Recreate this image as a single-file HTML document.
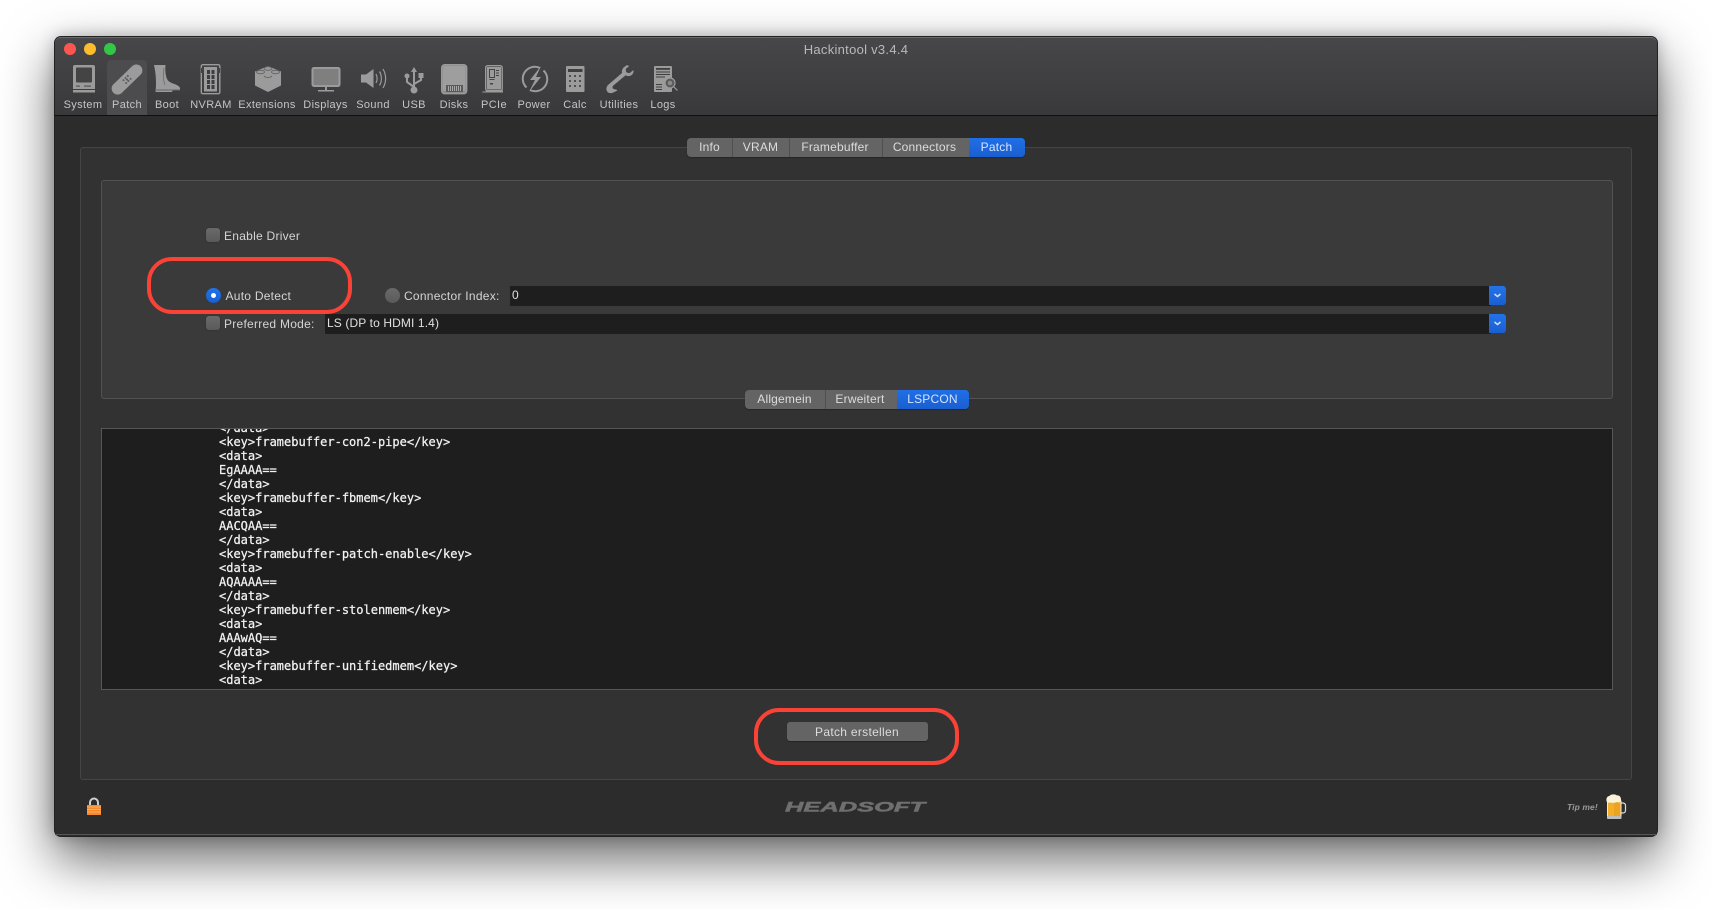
<!DOCTYPE html>
<html lang="en"><head><meta charset="utf-8"><title>Hackintool</title>
<style>
html,body{margin:0;padding:0;width:1712px;height:909px;overflow:hidden;background:#fff;font-family:"Liberation Sans",sans-serif}
.a{position:absolute;box-sizing:border-box}
.t{position:absolute;white-space:nowrap;line-height:14px;color:#d4d4d4;font-size:12px;letter-spacing:.26px}
.c{position:absolute;white-space:nowrap;transform:translateX(-50%);line-height:14px}
.lb{color:#c4c4c4;font-size:11px;letter-spacing:.36px;top:98px}
.seg{position:absolute;height:19px;border-radius:4px;background:#646464;overflow:hidden;box-shadow:0 1px 1px rgba(0,0,0,.25)}
.seg i{position:absolute;top:0;bottom:0;width:1px;background:#4f4f4f}
.seg b{position:absolute;top:0;bottom:0;right:0;background:linear-gradient(#1f6fe6,#1a5fd0)}
.seg span{position:absolute;top:2px;transform:translateX(-50%);font-size:12px;line-height:15px;color:#dcdcdc;white-space:nowrap;letter-spacing:.2px}
.cb{position:absolute;width:14px;height:14px;border-radius:3px;background:linear-gradient(#6a6a6a,#5a5a5a);box-shadow:0 0 1px rgba(0,0,0,.5)}
.fld{position:absolute;background:#1e1e1e;color:#e0e0e0;font-size:12px;line-height:18px;height:20px;letter-spacing:.12px}
.blue{position:absolute;left:1489px;width:17px;height:19px;border-radius:0 3px 3px 0;background:linear-gradient(#2273ea,#1a5fd0)}
.red{position:absolute;box-sizing:border-box;border:4px solid #fb4237;border-radius:25px}
</style></head><body>

<div class="a" style="left:55px;top:37px;width:1602px;height:799px;border-radius:6px;background:#2c2c2c;box-shadow:0 0 0 1px #222,0 22px 52px 2px rgba(0,0,0,.58),0 0 16px rgba(0,0,0,.26)"></div>
<div class="a" style="left:55px;top:37px;width:1602px;height:79px;border-radius:6px 6px 0 0;background:linear-gradient(#47474a,#39393b);border-top:1px solid #6a6a6a;border-bottom:1px solid #0f0f0f"></div>
<div class="a" style="left:55px;top:834px;width:1602px;height:1px;background:#555"></div>

<div class="a" style="left:64px;top:43px;width:12px;height:12px;border-radius:50%;background:#fc5650"></div>
<div class="a" style="left:84px;top:43px;width:12px;height:12px;border-radius:50%;background:#fdbc2e"></div>
<div class="a" style="left:104px;top:43px;width:12px;height:12px;border-radius:50%;background:#33c748"></div>
<div class="c" style="left:856px;top:42.500px;font-size:13px;color:#b9b9b9;letter-spacing:.28px">Hackintool v3.4.4</div>

<div class="a" style="left:107px;top:60px;width:40px;height:55px;border-radius:4px 4px 0 0;background:#4c4c4e"></div>

<svg class="a" style="left:0;top:0" width="1712" height="120" viewBox="0 0 1712 120" fill="#9b9b9b">
<!-- System -->
<path d="M75 65h18a2 2 0 0 1 2 2v22h-22v-22a2 2 0 0 1 2-2z"/><rect x="76" y="67.500" width="16" height="15" rx="1" fill="#444"/><rect x="73" y="90" width="22" height="2.500"/><rect x="76" y="85.500" width="4" height="1.200" fill="#555"/><rect x="84" y="85.500" width="7" height="1.200" fill="#555"/>
<!-- Patch -->
<g transform="rotate(-44 127 79.500)"><rect x="108" y="73.500" width="38" height="12" rx="6"/><g fill="#5c5c5c"><circle cx="124" cy="77.500" r="1"/><circle cx="127" cy="77.500" r="1"/><circle cx="130" cy="77.500" r="1"/><circle cx="124" cy="81.500" r="1"/><circle cx="127" cy="81.500" r="1"/><circle cx="130" cy="81.500" r="1"/><circle cx="127" cy="79.500" r="1"/></g></g>
<!-- Boot -->
<path d="M154 65h11.500c-.5 6 0 12 2.500 15.500 3 3.500 10.500 3.500 12 7.500v2.500h-7l-1.500 1.500h-16c1-9 .5-18-1.500-27z"/><path d="M164 68c-1 6-1 12 1 17" stroke="#6c6c6c" stroke-width=".8" fill="none"/><rect x="155" y="89.500" width="25" height="1" fill="#666"/>
<!-- NVRAM -->
<rect x="201.300" y="64.700" width="18.500" height="29" rx="1.500" fill="none" stroke="#9b9b9b" stroke-width="1.400"/><rect x="204" y="67" width="13" height="24.500"/><rect x="201" y="68" width="3" height="5" fill="#444"/><rect x="217" y="68" width="3" height="5" fill="#444"/><g fill="#3d3d3d"><rect x="207" y="70" width="3" height="4"/><rect x="211.500" y="70" width="3" height="4"/><rect x="207" y="75" width="3" height="4"/><rect x="211.500" y="75" width="3" height="4"/><rect x="207" y="80" width="3" height="4"/><rect x="211.500" y="80" width="3" height="4"/><rect x="207" y="85" width="3" height="4"/><rect x="211.500" y="85" width="3" height="4"/></g>
<!-- Extensions -->
<path d="M255 71.500l13-5.500 13 5.500v14l-13 6.500-13-6.500z"/><g fill="none" stroke="#5c5c5c" stroke-width=".8"><ellipse cx="268" cy="68.500" rx="4" ry="1.800"/><ellipse cx="260.500" cy="72" rx="4" ry="1.800"/><ellipse cx="275.500" cy="72" rx="4" ry="1.800"/><path d="M264 76c2 2 6 2 8 0"/></g>
<!-- Displays -->
<rect x="312.500" y="68" width="27" height="18" rx="1.500" fill="#7f7f7f" stroke="#9b9b9b" stroke-width="2"/><path d="M325 86h2v4h-2z"/><rect x="318" y="90" width="16" height="1.500"/>
<!-- Sound -->
<path d="M361 74.500h5l7.500-5.500v19l-7.500-5.500h-5z"/><g fill="none" stroke="#9b9b9b" stroke-width="1.200"><path d="M376 74c1.500 3 1.500 6 0 9"/><path d="M379.500 71.500c2.500 4 2.500 10 0 14"/><path d="M383 69c3.500 6 3.500 13 0 19"/></g>
<!-- USB -->
<g fill="none" stroke="#9b9b9b" stroke-width="2"><path d="M414 71v19"/><path d="M414 87l-7-5v-4"/><path d="M414 84l7-4v-4"/></g><path d="M414 67l3 5h-6z"/><circle cx="407" cy="76" r="2.500"/><rect x="418.500" y="73" width="5" height="5"/><circle cx="414" cy="90" r="3.500"/>
<!-- Disks -->
<rect x="441.700" y="64.700" width="25" height="29" rx="3" fill="#8e8e8e" stroke="#9b9b9b" stroke-width="1.400"/><rect x="443" y="66" width="22.500" height="25" rx="2" fill="#9e9e9e"/><rect x="446" y="85" width="17" height="7" fill="#5a5a5a"/><g fill="#a8a8a8"><rect x="448" y="86" width="1" height="5"/><rect x="450" y="86" width="1" height="5"/><rect x="452" y="86" width="1" height="5"/><rect x="454" y="86" width="1" height="5"/><rect x="456" y="86" width="1" height="5"/><rect x="458" y="86" width="1" height="5"/><rect x="460" y="86" width="1" height="5"/></g>
<!-- PCIe -->
<rect x="485.700" y="65.700" width="16.500" height="25" rx="2" fill="none" stroke="#9b9b9b" stroke-width="1.400"/><rect x="487" y="67" width="14" height="22.500"/><rect x="489.500" y="69.500" width="5" height="8" fill="none" stroke="#444" stroke-width="1"/><rect x="496" y="70" width="3" height="1" fill="#444"/><rect x="496" y="72.500" width="3" height="1" fill="#444"/><rect x="496" y="75" width="3" height="1" fill="#444"/><rect x="490" y="83" width="3" height="1.500" fill="#444"/><path d="M482.500 93v-1.500h3l.5-1h17v2h-20" /><rect x="489.500" y="79" width="5" height="1" fill="#444"/>
<!-- Power -->
<path d="M526.500 87.500a12 12 0 0 1 13.500-19.500" fill="none" stroke="#9b9b9b" stroke-width="2"/><path d="M543.500 70.500a12 12 0 0 1-13.500 19.500" fill="none" stroke="#9b9b9b" stroke-width="2"/><path d="M541 66l-11 14h5l-6 12 12-15h-5z"/>
<!-- Calc -->
<rect x="566" y="66" width="18.500" height="26" rx="1"/><rect x="568" y="69" width="14.500" height="3" fill="#3f3f3f"/><g fill="#505050"><rect x="569" y="75" width="2" height="2"/><rect x="574" y="75" width="2" height="2"/><rect x="579" y="75" width="2" height="2"/><rect x="569" y="80" width="2" height="2"/><rect x="574" y="80" width="2" height="2"/><rect x="579" y="80" width="2" height="2"/><rect x="569" y="85" width="2" height="2"/><rect x="574" y="85" width="2" height="2"/><rect x="579" y="85" width="2" height="2"/></g>
<!-- Utilities -->
<path d="M626 66c-3 1-4.500 4-4 7L608 85c-1.800 1.800-2 4.500-.8 6.500 1.300 1.800 4 2 6 1l3.300-1.500c.8-.5.8-1 .3-1.300l-3.300-.7c-1.300-.8-1.300-2.600 0-3.600l12-10c3 1.300 6 .8 7.500-2 .5-1 .6-2.300.5-3.400l-4 3.300-3.300-1-.5-3.300 3.500-3c-.8-.5-2-.7-3.500-.5z"/>
<!-- Logs -->
<rect x="654" y="66" width="18" height="26" rx="1"/><g fill="#3f3f3f"><rect x="656" y="68" width="14" height="1.800"/><rect x="656" y="71.500" width="14" height="1"/><rect x="656" y="74" width="14" height="1"/><rect x="656" y="76.500" width="9" height="1"/><rect x="656" y="84" width="6" height="1"/><rect x="656" y="86.500" width="6" height="1"/><rect x="656" y="89" width="6" height="1"/></g><circle cx="670" cy="83" r="5" fill="#5a5a5a" stroke="#9b9b9b" stroke-width="1.200"/><circle cx="670" cy="83" r="2.300" fill="#8a8a8a"/><path d="M674 87l3.500 3.500" stroke="#9b9b9b" stroke-width="1.200"/>
</svg>

<div class="c lb" style="left:83px">System</div>
<div class="c lb" style="left:127px">Patch</div>
<div class="c lb" style="left:167px">Boot</div>
<div class="c lb" style="left:211px">NVRAM</div>
<div class="c lb" style="left:267px">Extensions</div>
<div class="c lb" style="left:325.500px">Displays</div>
<div class="c lb" style="left:373px">Sound</div>
<div class="c lb" style="left:414px">USB</div>
<div class="c lb" style="left:454px">Disks</div>
<div class="c lb" style="left:494px">PCIe</div>
<div class="c lb" style="left:534px">Power</div>
<div class="c lb" style="left:575px">Calc</div>
<div class="c lb" style="left:619px">Utilities</div>
<div class="c lb" style="left:663px">Logs</div>

<!-- outer group -->
<div class="a" style="left:80px;top:147px;width:1552px;height:633px;background:#323232;border:1px solid #454545;border-radius:3px"></div>
<!-- inner group -->
<div class="a" style="left:101px;top:180px;width:1512px;height:219px;background:#3a3a3a;border:1px solid #525252;border-radius:3px"></div>

<!-- top tabs -->
<div class="seg" style="left:687px;top:138px;width:338px">
<b style="width:56px"></b>
<i style="left:45px"></i><i style="left:102px"></i><i style="left:195px"></i>
<span style="left:22.500px">Info</span>
<span style="left:73.500px">VRAM</span>
<span style="left:148px">Framebuffer</span>
<span style="left:237.500px">Connectors</span>
<span style="left:309.500px;color:#d6e4ff">Patch</span>
</div>

<!-- controls -->
<div class="cb" style="left:206px;top:228px"></div>
<div class="t" style="left:224px;top:228.500px">Enable Driver</div>

<div class="a" style="left:206px;top:287.500px;width:15px;height:15px;border-radius:50%;background:linear-gradient(#2273ea,#1a5fd0)"></div>
<div class="a" style="left:211px;top:292.500px;width:5px;height:5px;border-radius:50%;background:#fff"></div>
<div class="t" style="left:225.500px;top:288.500px">Auto Detect</div>

<div class="a" style="left:385px;top:287.500px;width:15px;height:15px;border-radius:50%;background:linear-gradient(#6a6a6a,#5a5a5a)"></div>
<div class="t" style="left:404px;top:288.500px">Connector Index:</div>
<div class="fld" style="left:510px;top:286px;width:979px;padding-left:2px">0</div>
<div class="blue" style="top:286px"><svg width="17" height="19"><path d="M5.500 8l3 2.500 3-2.500" fill="none" stroke="#cfe0ff" stroke-width="1.500"/></svg></div>

<div class="cb" style="left:206px;top:316px"></div>
<div class="t" style="left:224px;top:316.500px">Preferred Mode:</div>
<div class="fld" style="left:325px;top:314px;width:1164px;padding-left:2px">LS (DP to HDMI 1.4)</div>
<div class="blue" style="top:314px"><svg width="17" height="19"><path d="M5.500 8l3 2.500 3-2.500" fill="none" stroke="#cfe0ff" stroke-width="1.500"/></svg></div>

<div class="red" style="left:147px;top:257px;width:205px;height:57px"></div>

<!-- sub tabs -->
<div class="seg" style="left:745px;top:390px;width:224px">
<b style="width:72px"></b>
<i style="left:80px"></i>
<span style="left:39.500px">Allgemein</span>
<span style="left:115px">Erweitert</span>
<span style="left:187.500px;color:#d6e4ff">LSPCON</span>
</div>

<!-- text view -->
<div class="a" style="left:101px;top:428px;width:1512px;height:262px;background:#1e1e1e;border:1px solid #565656;overflow:hidden">
<pre style="position:absolute;left:117px;top:-8px;margin:0;font-family:'DejaVu Sans Mono','Liberation Mono',monospace;font-size:12px;line-height:14px;color:#f2f2f2;-webkit-text-stroke:.25px #f2f2f2">&lt;/data&gt;
&lt;key&gt;framebuffer-con2-pipe&lt;/key&gt;
&lt;data&gt;
EgAAAA==
&lt;/data&gt;
&lt;key&gt;framebuffer-fbmem&lt;/key&gt;
&lt;data&gt;
AACQAA==
&lt;/data&gt;
&lt;key&gt;framebuffer-patch-enable&lt;/key&gt;
&lt;data&gt;
AQAAAA==
&lt;/data&gt;
&lt;key&gt;framebuffer-stolenmem&lt;/key&gt;
&lt;data&gt;
AAAwAQ==
&lt;/data&gt;
&lt;key&gt;framebuffer-unifiedmem&lt;/key&gt;
&lt;data&gt;</pre>
</div>

<!-- button -->
<div class="a" style="left:787px;top:722px;width:141px;height:19px;border-radius:3px;background:#646464;box-shadow:0 1px 1px rgba(0,0,0,.3)"></div>
<div class="c" style="left:857px;top:724.500px;font-size:12px;color:#dcdcdc;letter-spacing:.3px">Patch erstellen</div>
<div class="red" style="left:754px;top:708px;width:205px;height:57px"></div>

<!-- lock -->
<svg class="a" style="left:85px;top:796px" width="18" height="22" viewBox="0 0 18 22">
<path d="M5 10V6.500a4 4 0 0 1 8 0V10" fill="none" stroke="#cfcfcf" stroke-width="2"/>
<rect x="2" y="9" width="14" height="10" fill="#f58a2c"/>
<g fill="#fbb265"><rect x="2" y="10.500" width="14" height="1"/><rect x="2" y="13" width="14" height="1"/><rect x="2" y="15.500" width="14" height="1"/></g>
</svg>

<!-- logo -->
<svg class="a" style="left:780px;top:796px" width="150" height="22" viewBox="0 0 150 22">
<text x="5" y="15.500" font-family="Liberation Sans,sans-serif" font-size="14" font-weight="700" font-style="italic" fill="#6f6f6f" textLength="140" lengthAdjust="spacingAndGlyphs" stroke="#6f6f6f" stroke-width=".5">HEADSOFT</text>
</svg>

<!-- tip -->
<div class="t" style="left:1567px;top:800px;font-size:8.500px;font-weight:700;font-style:italic;color:#9a9a9a;letter-spacing:.1px">Tip me!</div>
<svg class="a" style="left:1604px;top:792px" width="24" height="30" viewBox="0 0 24 30">
<path d="M17 11h2a2.500 2.500 0 0 1 2.500 2.500v5a2.500 2.500 0 0 1-2.500 2.500h-2" fill="none" stroke="#dcdcdc" stroke-width="1.200"/>
<rect x="3" y="8" width="14.500" height="19" rx="1.500" fill="#e9e9e9"/>
<rect x="4" y="9" width="12.500" height="15" fill="#f4ae2a"/>
<rect x="10" y="9" width="6.500" height="15" fill="#eda322"/>
<path d="M2.500 9c-.5-3 1-5 3-5 1-2 6-2 7.500-.5 2.500-.5 4.500 2 4 5.500-1 2-3 1.500-4 1-2 1-5 1-6.500.5-2 .5-3.500.3-4-1.500z" fill="#fbf3d9"/>
<rect x="3" y="24" width="14.500" height="3" rx="1" fill="#bdbdbd"/>
</svg>

</body></html>
